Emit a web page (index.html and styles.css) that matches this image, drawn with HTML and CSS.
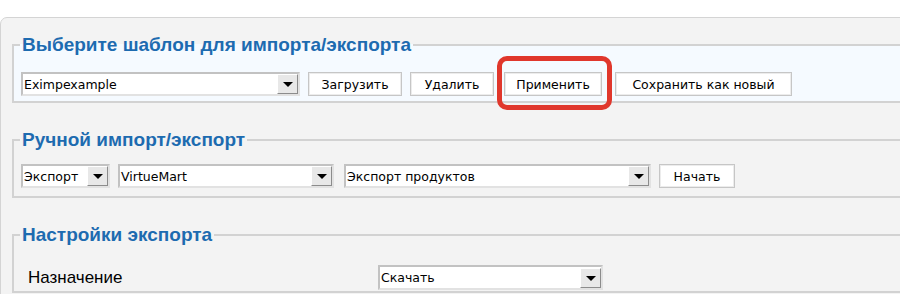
FILE: index.html
```html
<!doctype html>
<html lang="ru">
<head>
    <meta charset="UTF-8">
    <title>Импорт/экспорт</title>
    <link rel="stylesheet" href="styles.css">
</head>
<body>
    <div class="panel">
        <fieldset class="box box-blue">
            <legend>Выберите шаблон для импорта/экспорта</legend>
            <div class="row">
                <div class="sel sel-tpl"><span>Eximpexample</span><i></i></div>
                <button class="btn btn-load">Загрузить</button>
                <button class="btn btn-del">Удалить</button>
                <span class="mark"><button class="btn btn-apply">Применить</button></span>
                <button class="btn btn-save">Сохранить как новый</button>
            </div>
        </fieldset>

        <fieldset class="box">
            <legend>Ручной импорт/экспорт</legend>
            <div class="row row-manual">
                <div class="sel sel-type"><span>Экспорт</span><i></i></div>
                <div class="sel sel-comp"><span>VirtueMart</span><i></i></div>
                <div class="sel sel-what"><span>Экспорт продуктов</span><i></i></div>
                <button class="btn btn-start">Начать</button>
            </div>
        </fieldset>

        <fieldset class="box">
            <legend>Настройки экспорта</legend>
            <div class="row row-opt">
                <label class="lbl">Назначение</label>
                <div class="sel sel-dest"><span>Скачать</span><i></i></div>
            </div>
        </fieldset>
    </div>
</body>
</html>
```

FILE: styles.css
```css
*{
    margin: 0;
    padding: 0;
    box-sizing: border-box;
}
html,body{
    background: #fff;
    overflow: hidden;
    width: 900px;
    height: 294px;
}
body{
    font-family: "Liberation Sans", Arial, sans-serif;
    padding-top: 17px;
}
.panel{
    width: 1000px;
    background: #f3f3f3;
    border: 1px solid #d4d4d4;
    border-top-left-radius: 7px;
    padding: 16px 0 0 11px;
    height: 300px;
}
.box{
    border: 2px solid #d2d2d2;
    padding: 0 0 13px 6px;
    margin-bottom: 26px;
    height: 69px;
}
.box-blue{
    background: #f5faff;
}
.box legend{
    font-size: 19px;
    font-weight: bold;
    color: #1d6bb0;
    padding: 0 2px;
    line-height: 22px;
}
.row{
    display: flex;
    align-items: center;
    margin-top: 16px;
}
.row-manual{
    margin-top: 13px;
}
.sel{
    height: 24px;
    background: #fff;
    border: 2px solid;
    border-color: #c2c2c2 #e2e2e2 #e2e2e2 #c2c2c2;
    display: flex;
    align-items: center;
    font-family: "DejaVu Sans", Verdana, sans-serif;
    font-size: 12.5px;
    color: #000;
}
.sel span{
    flex: 1;
    padding-left: 1px;
    white-space: nowrap;
    overflow: hidden;
}
.sel i{
    width: 21px;
    height: 20px;
    background: #e8e8e8;
    border: 1px solid;
    border-color: #fff #8c8c8c #8c8c8c #fff;
    position: relative;
}
.sel i::after{
    content: "";
    position: absolute;
    left: 5px;
    top: 7px;
    border-left: 5px solid transparent;
    border-right: 5px solid transparent;
    border-top: 5px solid #000;
}
.btn{
    height: 24px;
    background: #fff;
    border: 1px solid #c6c6c6;
    box-shadow: inset 0 0 0 1px #ececec;
    font-family: "DejaVu Sans", Verdana, sans-serif;
    font-size: 12.5px;
    color: #000;
    text-align: center;
}
.sel-tpl{ width: 279px; margin-left: 1px; }
.btn-load{ width: 94px; margin-left: 8px; }
.btn-del{ width: 84px; margin-left: 8px; }
.mark{
    position: relative;
    display: flex;
    margin-left: 10px;
}
.mark::after{
    content: "";
    position: absolute;
    top: -16px;
    bottom: -14px;
    left: -7px;
    right: -10px;
    border: 5px solid #e0372c;
    border-radius: 10px;
}
.btn-apply{ width: 98px; }
.btn-save{ width: 177px; margin-left: 13px; }

.sel-type{ width: 89px; margin-left: 1px; }
.sel-comp{ width: 216px; margin-left: 8px; }
.sel-what{ width: 307px; margin-left: 10px; }
.btn-start{ width: 76px; margin-left: 8px; }

.row-opt{
    margin-top: 19px;
}
.lbl{
    font-size: 17px;
    color: #000;
    width: 358px;
    padding-left: 8px;
}
.sel-dest{ width: 225px; height: 25px; }
```
